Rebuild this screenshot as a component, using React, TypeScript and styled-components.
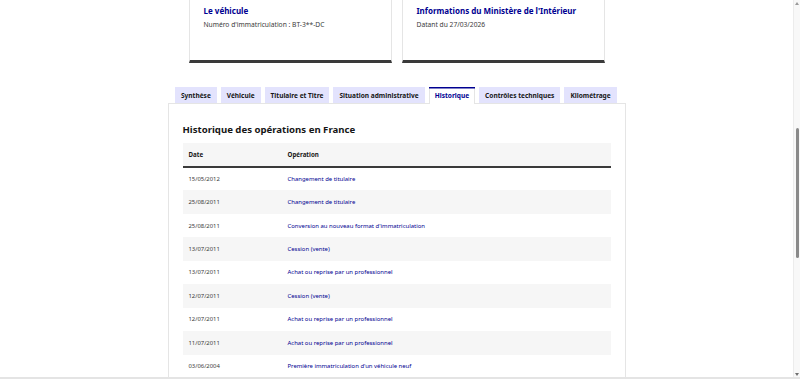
import React, { useLayoutEffect, useRef } from "react";
import styled, { createGlobalStyle } from "styled-components";

const Global = createGlobalStyle`
  html, body { margin: 0; padding: 0; background: #e4e4e4; overflow: hidden; }
  body { font-family: "Noto Sans", "Open Sans", Arial, sans-serif; color: #161616; }
`;

const Frame = styled.div`
  display: flex;
  height: 377px;
  background: #ffffff;
`;

const Viewport = styled.div`
  flex: 1;
  min-width: 0;
  height: 377px;
  overflow-y: scroll;
  overflow-x: hidden;
  scrollbar-width: none;
  &::-webkit-scrollbar { display: none; }
`;

const ScrollTrack = styled.div`
  width: 7px;
  flex: none;
  box-sizing: border-box;
  background: #f8f8f8;
  border-left: 1px solid #ececec;
  display: flex;
  flex-direction: column;
  align-items: center;
  padding: 2px 0 1px;
`;

const ArrowUp = styled.div`
  width: 0;
  height: 0;
  border-left: 2px solid transparent;
  border-right: 2px solid transparent;
  border-bottom: 3px solid #9a9a9a;
`;

const ArrowDown = styled.div`
  width: 0;
  height: 0;
  margin-top: auto;
  border-left: 2px solid transparent;
  border-right: 2px solid transparent;
  border-top: 3px solid #6f6f6f;
`;

const Thumb = styled.div`
  width: 3px;
  height: 130px;
  margin-top: 123px;
  border-radius: 2px;
  background: #8a8a8a;
`;

const Column = styled.main`
  width: 458px;
  margin: 0 auto;
  padding-top: 96px;
  box-sizing: border-box;
`;

const Cards = styled.div`
  display: grid;
  grid-template-columns: 1fr 1fr;
  gap: 10px;
  padding: 0 21px;
`;

const Card = styled.div`
  box-sizing: border-box;
  height: 162px;
  background: #fff;
  border: 1px solid #e5e5e5;
  border-bottom: 3px solid #3a3a3a;
  padding: 102px 14px 0;
`;

const CardTitle = styled.h3`
  margin: 0;
  font-size: 8px;
  line-height: 14px;
  font-weight: 700;
  color: #000091;
  white-space: nowrap;
`;

const CardDesc = styled.p`
  margin: 1px 0 0;
  font-size: 6.7px;
  line-height: 12px;
  color: #3a3a3a;
`;

const Tabs = styled.div`
  margin-top: 24px;
`;

const TabList = styled.div`
  display: flex;
  gap: 4px;
  padding-left: 7.5px;
  position: relative;
  z-index: 1;
`;

const Tab = styled.button<{ $active?: boolean }>`
  box-sizing: border-box;
  padding: 0 6px;
  border: none;
  font-family: inherit;
  font-size: 6.55px;
  font-weight: 700;
  white-space: nowrap;
  cursor: pointer;
  background: ${(p) => (p.$active ? "#ffffff" : "#e3e3fd")};
  color: ${(p) => (p.$active ? "#000091" : "#161616")};
  box-shadow: ${(p) =>
    p.$active
      ? "inset 0 1.5px 0 0 #000091, inset 1px 0 0 #e5e5e5, inset -1px 0 0 #e5e5e5"
      : "none"};
  margin: 0 0 ${(p) => (p.$active ? "-1px" : "0")};
  height: ${(p) => (p.$active ? "17px" : "16px")};
`;

const Panel = styled.section`
  border: 1px solid #e5e5e5;
  padding: 18px 14px 2px;
`;

const Heading = styled.h2`
  margin: 0 0 5px;
  font-size: 9.6px;
  line-height: 16px;
  font-weight: 700;
  color: #161616;
`;

const Table = styled.table`
  width: 100%;
  border-collapse: collapse;
  table-layout: fixed;
`;

const HeadCell = styled.th<{ $w?: number }>`
  box-sizing: border-box;
  width: ${(p) => (p.$w ? `${p.$w}px` : "auto")};
  height: 24px;
  padding: 0 6px;
  text-align: left;
  font-size: 6.2px;
  font-weight: 700;
  color: #161616;
  background: #f6f6f6;
  border-bottom: 2px solid #3a3a3a;
`;

const Row = styled.tr<{ $striped: boolean }>`
  height: 23.45px;
  background: ${(p) => (p.$striped ? "#f6f6f6" : "#ffffff")};
`;

const Cell = styled.td`
  padding: 0 6px;
  font-size: 5.9px;
  color: #3a3a3a;
`;

const OpLink = styled.a`
  color: #000091;
  text-decoration: none;
  font-size: 5.95px;
`;

const tabs = [
  "Synthèse",
  "Véhicule",
  "Titulaire et Titre",
  "Situation administrative",
  "Historique",
  "Contrôles techniques",
  "Kilométrage",
];

const rows: [string, string][] = [
  ["15/05/2012", "Changement de titulaire"],
  ["25/08/2011", "Changement de titulaire"],
  ["25/08/2011", "Conversion au nouveau format d'immatriculation"],
  ["13/07/2011", "Cession (vente)"],
  ["13/07/2011", "Achat ou reprise par un professionnel"],
  ["12/07/2011", "Cession (vente)"],
  ["12/07/2011", "Achat ou reprise par un professionnel"],
  ["11/07/2011", "Achat ou reprise par un professionnel"],
  ["03/06/2004", "Première immatriculation d'un véhicule neuf"],
];

export default function App() {
  const ref = useRef<HTMLDivElement>(null);
  useLayoutEffect(() => {
    if (ref.current) ref.current.scrollTop = 195;
  }, []);
  return (
    <>
      <Global />
      <Frame>
        <Viewport ref={ref}>
          <Column>
            <Cards>
              <Card>
                <CardTitle>Le véhicule</CardTitle>
                <CardDesc>Numéro d'immatriculation : BT-3**-DC</CardDesc>
              </Card>
              <Card>
                <CardTitle>Informations du Ministère de l'Intérieur</CardTitle>
                <CardDesc>Datant du 27/03/2026</CardDesc>
              </Card>
            </Cards>
            <Tabs>
              <TabList>
                {tabs.map((t) => (
                  <Tab key={t} $active={t === "Historique"}>
                    {t}
                  </Tab>
                ))}
              </TabList>
              <Panel>
                <Heading>Historique des opérations en France</Heading>
                <Table>
                  <thead>
                    <tr>
                      <HeadCell $w={99}>Date</HeadCell>
                      <HeadCell>Opération</HeadCell>
                    </tr>
                  </thead>
                  <tbody>
                    {rows.map(([d, op], i) => (
                      <Row key={i} $striped={i % 2 === 1}>
                        <Cell>{d}</Cell>
                        <Cell>
                          <OpLink href="#">{op}</OpLink>
                        </Cell>
                      </Row>
                    ))}
                  </tbody>
                </Table>
              </Panel>
            </Tabs>
          </Column>
        </Viewport>
        <ScrollTrack>
          <ArrowUp />
          <Thumb />
          <ArrowDown />
        </ScrollTrack>
      </Frame>
    </>
  );
}
